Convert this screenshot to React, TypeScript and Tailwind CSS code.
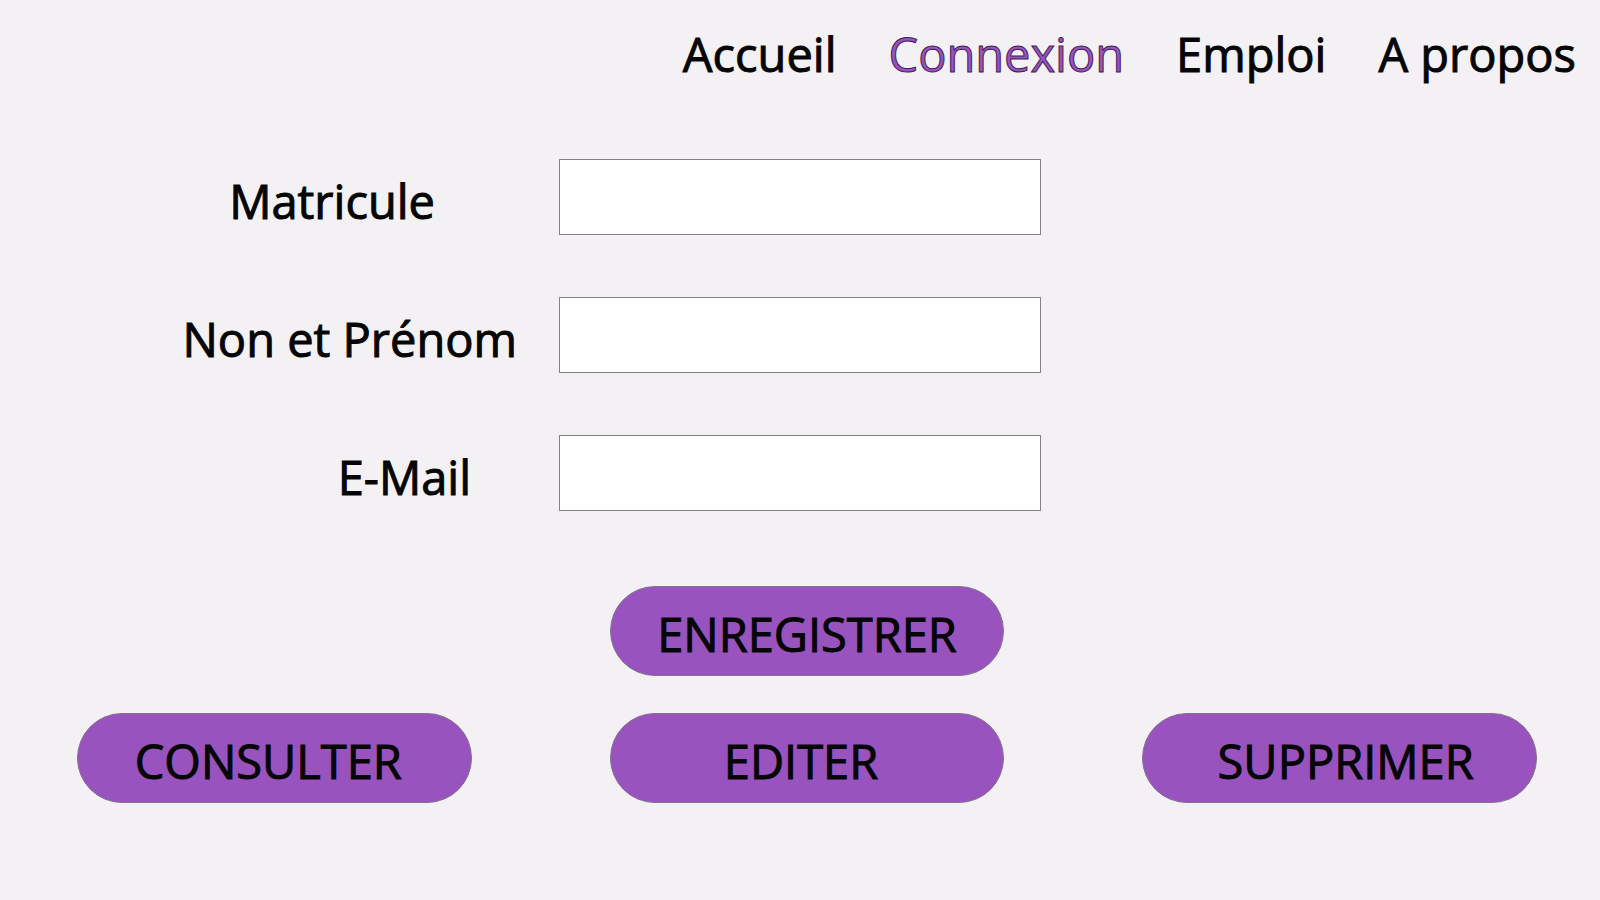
const navLinks = [
  { label: "Accueil", active: false },
  { label: "Connexion", active: true },
  { label: "Emploi", active: false },
  { label: "A propos", active: false },
];

const fields = [
  { id: "matricule", label: "Matricule", type: "text", inset: "pr-[124px]" },
  { id: "nom", label: "Non et Prénom", type: "text", inset: "pr-[42px]" },
  { id: "email", label: "E-Mail", type: "email", inset: "pr-[88px]" },
];

function ActionButton({ label, className = "" }: { label: string; className?: string }) {
  return (
    <button
      type="button"
      className={`h-[90px] cursor-pointer rounded-full border border-[#85708f] bg-[#9853be] pt-1.5 text-center ${className}`}
    >
      {label}
    </button>
  );
}

export default function App() {
  return (
    <div className="min-h-screen bg-[#f4f1f5] font-['Open_Sans',sans-serif] text-[47px] leading-[64px] text-[#060606] [-webkit-text-stroke:1px_#060606]">
      <header className="pt-[22px] pr-6">
        <nav className="flex justify-end gap-[52px]">
          {navLinks.map(({ label, active }) => (
            <a
              key={label}
              href="#"
              aria-current={active ? "page" : undefined}
              className={active ? "text-[#9853be] [-webkit-text-stroke:1px_#3f1d52]" : ""}
            >
              {label}
            </a>
          ))}
        </nav>
      </header>

      <main className="pt-[73px]">
        <form>
          <div className="flex flex-col gap-[62px]">
            {fields.map(({ id, label, type, inset }) => (
              <div key={id} className="grid grid-cols-[559fr_482fr_559fr] items-center">
                <label htmlFor={id} className={`pt-2 text-right whitespace-nowrap ${inset}`}>
                  {label}
                </label>
                <input
                  id={id}
                  name={id}
                  type={type}
                  className="h-[76px] w-full border border-[#858085] bg-white px-4 outline-none"
                />
              </div>
            ))}
          </div>

          <div className="grid grid-cols-3 gap-x-[138px] gap-y-[37px] pt-[75px] pr-[63px] pb-12 pl-[77px]">
            <ActionButton label="ENREGISTRER" className="col-start-2" />
            <ActionButton label="CONSULTER" className="col-start-1 pr-3" />
            <ActionButton label="EDITER" className="pr-3" />
            <ActionButton label="SUPPRIMER" className="pl-3" />
          </div>
        </form>
      </main>
    </div>
  );
}
